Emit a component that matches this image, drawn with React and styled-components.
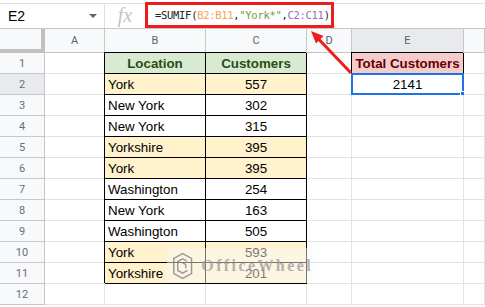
import styled, { createGlobalStyle } from "styled-components";

const GlobalStyle = createGlobalStyle`
  html, body {
    margin: 0;
    padding: 0;
    background: #fff;
    overflow: hidden;
  }
  body {
    font-family: "Liberation Sans", Arial, sans-serif;
  }
`;

const rows = [
  { loc: "York", n: 557, hi: true },
  { loc: "New York", n: 302 },
  { loc: "New York", n: 315 },
  { loc: "Yorkshire", n: 395, hi: true },
  { loc: "York", n: 395, hi: true },
  { loc: "Washington", n: 254 },
  { loc: "New York", n: 163 },
  { loc: "Washington", n: 505 },
  { loc: "York", n: 593, hi: true },
  { loc: "Yorkshire", n: 201, hi: true },
];

const cols = ["A", "B", "C", "D", "E", ""];

export default function App() {
  return (
    <Page>
      <GlobalStyle />
      <FormulaBar>
        <NameBox>
          E2
          <Caret />
        </NameBox>
        <FxLabel>fx</FxLabel>
        <FormulaBox>
          <Token>=SUMIF(</Token>
          <Token $c="#f3a25a">B2:B11</Token>
          <Token>,</Token>
          <Token $c="#6f9a3a">"York*"</Token>
          <Token>,</Token>
          <Token $c="#9a6bb8">C2:C11</Token>
          <Token>)</Token>
        </FormulaBox>
      </FormulaBar>

      <Sheet>
        <Corner />
        {cols.map((c) => (
          <ColHead key={c || "f"} $active={c === "E"}>
            {c}
          </ColHead>
        ))}

        <RowHead>1</RowHead>
        <Cell />
        <Cell $boxed $fill="#d9ead3" $align="center" $bold $color="#274e13">
          Location
        </Cell>
        <Cell $boxed $fill="#d9ead3" $align="center" $bold $color="#274e13">
          Customers
        </Cell>
        <Cell />
        <Cell $boxed $fill="#f4cccc" $align="center" $bold $color="#660000">
          Total Customers
        </Cell>
        <Cell />

        {rows.map((r, i) => (
          <Row key={i} idx={i + 2} r={r} />
        ))}

        <EmptyRow n={12} />
      </Sheet>

      <Arrow width="485" height="307" viewBox="0 0 485 307">
        <line x1="351" y1="73" x2="319" y2="39.5" stroke="#ee1c1c" strokeWidth="3" />
        <polygon points="311,31 323.5,36 316,43.5" fill="#ee1c1c" />
      </Arrow>

      <Watermark>
        <svg width="24" height="32" viewBox="0 0 24 32">
          <g fill="none" stroke="#8d8d8d" strokeWidth="1.7">
            <path d="M12 2 L22 7.5 L22 24.5 L12 30 L2 24.5 L2 7.5 Z" />
            <path d="M17 10.5 L12 8 L6.5 11 L6.5 21 L12 24 L17.5 21" />
            <path d="M12 12.5 L15.5 14.5 L15.5 18.5" />
          </g>
        </svg>
        <WatermarkText>OfficeWheel</WatermarkText>
      </Watermark>
    </Page>
  );
}

function Row({ idx, r }) {
  const fill = r.hi ? "#fff2cc" : "#fff";
  return (
    <>
      <RowHead $active={idx === 2}>{idx}</RowHead>
      <Cell />
      <Cell $boxed $fill={fill}>{r.loc}</Cell>
      <Cell $boxed $fill={fill} $align="center">
        {r.n}
      </Cell>
      <Cell />
      {idx === 2 ? (
        <Cell $align="center">
          2141
          <Selection />
          <FillHandle />
        </Cell>
      ) : (
        <Cell />
      )}
      <Cell />
    </>
  );
}

function EmptyRow({ n }) {
  return (
    <>
      <RowHead>{n}</RowHead>
      {cols.map((c) => (
        <Cell key={c || "f"} />
      ))}
    </>
  );
}

const Page = styled.div`
  position: relative;
  width: 485px;
  height: 307px;
  padding-top: 3px;
  box-sizing: border-box;
  overflow: hidden;
`;

const FormulaBar = styled.div`
  display: flex;
  align-items: stretch;
  height: 26px;
  box-sizing: border-box;
  border-top: 1px solid #e0e0e0;
  border-bottom: 1px solid #c7c7c7;
`;

const NameBox = styled.div`
  position: relative;
  width: 105px;
  box-sizing: border-box;
  border-right: 1px solid #e0e0e0;
  padding-left: 8px;
  display: flex;
  align-items: center;
  font-size: 14px;
  color: #000;
`;

const Caret = styled.span`
  position: absolute;
  left: 89px;
  top: 10px;
  border-left: 4px solid transparent;
  border-right: 4px solid transparent;
  border-top: 4px solid #5f6368;
`;

const FxLabel = styled.div`
  width: 40px;
  display: flex;
  align-items: center;
  justify-content: center;
  font-family: "Liberation Serif", serif;
  font-style: italic;
  font-size: 20px;
  color: #c4c4c4;
  padding-bottom: 2px;
`;

const FormulaBox = styled.div`
  width: 189px;
  height: 26px;
  margin-top: -2px;
  box-sizing: border-box;
  border: 3px solid #ee1c1c;
  display: flex;
  align-items: center;
  padding-left: 7px;
  font-family: "DejaVu Sans Mono", monospace;
  font-size: 10.5px;
  letter-spacing: -0.3px;
  white-space: pre;
`;

const Token = styled.span`
  color: ${(p) => p.$c || "#202124"};
`;

const Sheet = styled.div`
  display: grid;
  grid-template-columns: 45px 60px 101px 101px 45px 112px 1fr;
  grid-template-rows: 24px repeat(13, 21px);
`;

const Corner = styled.div`
  background: #f8f9fa;
  border-right: 4px solid #c0c0c0;
  border-bottom: 4px solid #c0c0c0;
`;

const ColHead = styled.div`
  background: ${(p) => (p.$active ? "#e8eaed" : "#f8f9fa")};
  border-right: 1px solid #c7c7c7;
  border-bottom: 1px solid #c7c7c7;
  display: flex;
  align-items: center;
  justify-content: center;
  font-family: Roboto, "Liberation Sans", sans-serif;
  font-size: 11px;
  color: #5f6368;
`;

const RowHead = styled.div`
  background: ${(p) => (p.$active ? "#e8eaed" : "#f8f9fa")};
  border-right: 1px solid #c7c7c7;
  border-bottom: 1px solid #c7c7c7;
  display: flex;
  align-items: center;
  justify-content: center;
  font-family: Roboto, "Liberation Sans", sans-serif;
  font-size: 11px;
  color: #6b6f74;
`;

const Cell = styled.div`
  position: relative;
  background: ${(p) => p.$fill || "#fff"};
  border-right: 1px solid ${(p) => (p.$boxed ? "#000" : "#e2e3e3")};
  border-bottom: 1px solid ${(p) => (p.$boxed ? "#000" : "#e2e3e3")};
  box-shadow: ${(p) => (p.$boxed ? "-1px -1px 0 #000" : "none")};
  padding: 2px 3px 0;
  font-size: 13.33px;
  line-height: 18px;
  font-weight: ${(p) => (p.$bold ? 700 : 400)};
  color: ${(p) => p.$color || "#000"};
  text-align: ${(p) => p.$align || "left"};
  white-space: nowrap;
`;

const Selection = styled.div`
  position: absolute;
  left: -1px;
  top: -1px;
  right: -1px;
  bottom: -1px;
  border: 2px solid #1a73e8;
`;

const FillHandle = styled.div`
  position: absolute;
  right: -5px;
  bottom: -5px;
  width: 6px;
  height: 6px;
  background: #1a73e8;
  border: 1px solid #fff;
`;

const Arrow = styled.svg`
  position: absolute;
  left: 0;
  top: 0;
  pointer-events: none;
`;

const Watermark = styled.div`
  position: absolute;
  left: 167px;
  top: 248px;
  width: 146px;
  height: 35px;
  display: flex;
  align-items: center;
  gap: 8px;
  padding-left: 5px;
  box-sizing: border-box;
  background: rgba(250, 250, 250, 0.55);
  opacity: 0.85;
`;

const WatermarkText = styled.span`
  font-family: "Liberation Serif", serif;
  font-weight: 700;
  font-size: 16px;
  letter-spacing: 2.4px;
  color: #a6a6a6;
`;
